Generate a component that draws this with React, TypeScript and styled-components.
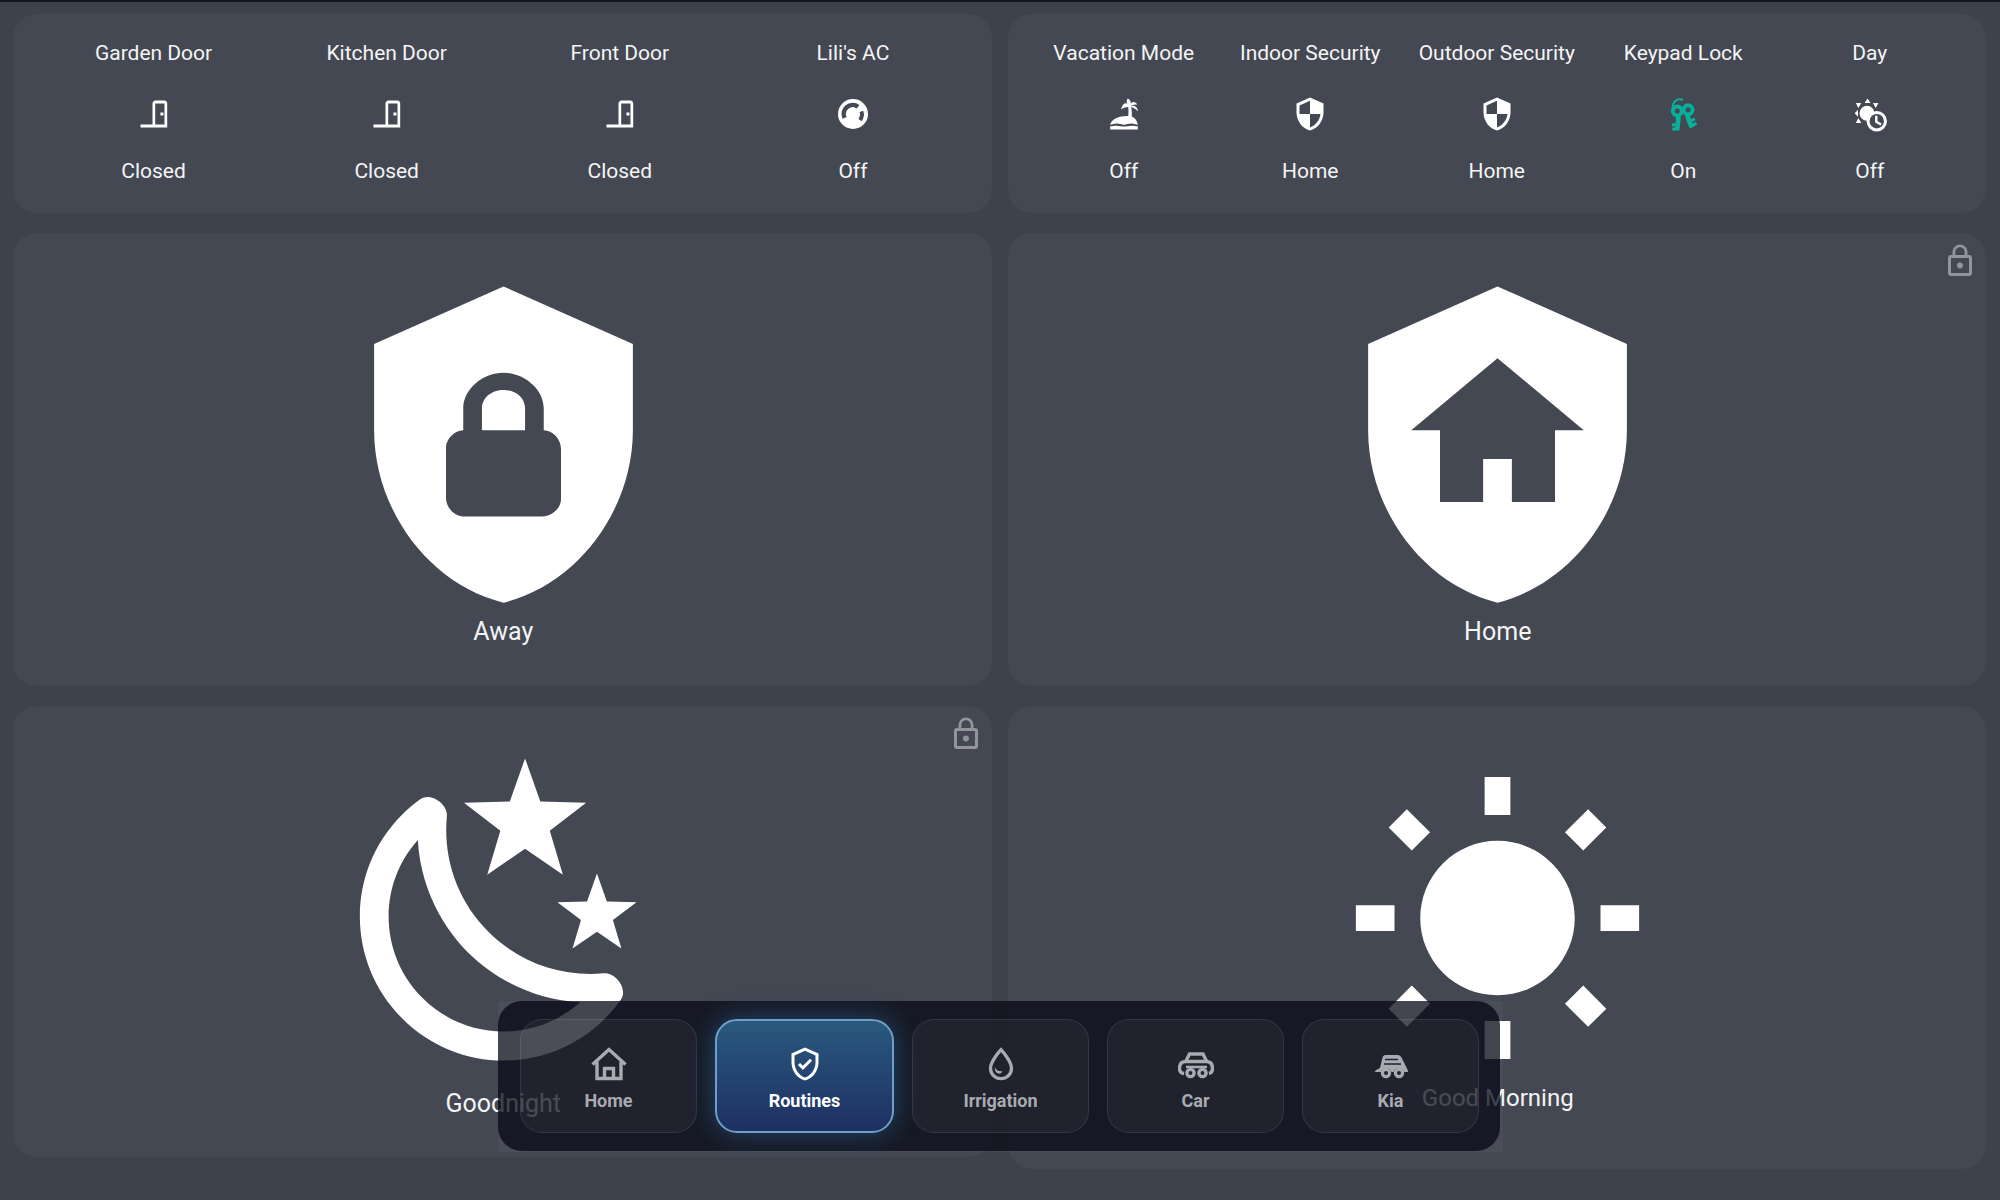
import React from "react";
import styled, { createGlobalStyle } from "styled-components";

const Global = createGlobalStyle`
  html, body {
    margin: 0;
    height: 100%;
    background: #3e424c;
    overflow: hidden;
  }
  body {
    font-family: Roboto, "Liberation Sans", sans-serif;
    color: #f4f4f5;
  }
`;

const PATHS = {
  door: "M3 19h8V5c0-1.1.9-2 2-2h6c1.1 0 1.8.9 1.8 2v16H3v-2zM12.8 5v14h6.2V5h-6.2zM16.3 11h2v2h-2v-2z",
  security:
    "M12,12H19C18.47,16.11 15.72,19.78 12,20.92V12H5V6.3L12,3.19M12,1L3,5V11C3,16.55 6.84,21.73 12,23C17.16,21.73 21,16.55 21,11V5L12,1Z",
  shieldLock:
    "M12,1L3,5V11C3,16.55 6.84,21.74 12,23C17.16,21.74 21,16.55 21,11V5L12,1M12,7C13.4,7 14.8,8.1 14.8,9.5V11C15.4,11 16,11.6 16,12.3V15.8C16,16.4 15.4,17 14.7,17H9.2C8.6,17 8,16.4 8,15.7V12.2C8,11.6 8.6,11 9.2,11V9.5C9.2,8.1 10.6,7 12,7M12,8.2C11.2,8.2 10.5,8.7 10.5,9.5V11H13.5V9.5C13.5,8.7 12.8,8.2 12,8.2Z",
  shieldHome:
    "M12,1L3,5V11C3,16.5 6.8,21.7 12,23C17.2,21.7 21,16.5 21,11V5L12,1M12,6L18,11H16V16H13V13H11V16H8V11H6L12,6Z",
  night:
    "M17.75,4.09L15.22,6.03L16.13,9.09L13.5,7.28L10.87,9.09L11.78,6.03L9.25,4.09L12.44,4L13.5,1L14.56,4L17.75,4.09M21.25,11L19.61,12.25L20.2,14.23L18.5,13.06L16.8,14.23L17.39,12.25L15.75,11L17.81,10.95L18.5,9L19.19,10.95L21.25,11M18.97,15.95C19.8,15.87 20.69,17.05 20.16,17.8C19.84,18.25 19.5,18.67 19.08,19.07C15.17,23 8.84,23 4.94,19.07C1.03,15.17 1.03,8.83 4.94,4.93C5.34,4.53 5.76,4.17 6.21,3.85C6.96,3.32 8.14,4.21 8.06,5.04C7.79,7.9 8.75,10.87 10.95,13.06C13.14,15.26 16.1,16.22 18.97,15.95M17.33,17.97C14.5,17.81 11.7,16.64 9.53,14.5C7.36,12.31 6.2,9.5 6.04,6.68C3.23,9.82 3.34,14.64 6.35,17.66C9.37,20.67 14.19,20.78 17.33,17.97Z",
  sun: "M3.55,18.54L4.96,19.95L6.76,18.16L5.34,16.74M11,22.45C11.32,22.45 13,22.45 13,22.45V19.5H11M12,5.5A6,6 0 0,0 6,11.5A6,6 0 0,0 12,17.5A6,6 0 0,0 18,11.5C18,8.18 15.31,5.5 12,5.5M20,12.5H23V10.5H20M17.24,18.16L19.04,19.95L20.45,18.54L18.66,16.74M20.45,4.46L19.04,3.05L17.24,4.84L18.66,6.26M13,0.55H11V3.5H13M4,10.5H1V12.5H4M6.76,4.84L4.96,3.05L3.55,4.46L5.34,6.26L6.76,4.84Z",
  lock: "M12,17C13.1,17 14,16.1 14,15C14,13.89 13.1,13 12,13A2,2 0 0,0 10,15A2,2 0 0,0 12,17M18,20H6V10H18M18,8H17V6A5,5 0 0,0 12,1A5,5 0 0,0 7,6V8H6A2,2 0 0,0 4,10V20A2,2 0 0,0 6,22H18A2,2 0 0,0 20,20V10A2,2 0 0,0 18,8M8.9,6C8.9,4.29 10.29,2.9 12,2.9C13.71,2.9 15.1,4.29 15.1,6V8H8.9V6Z",
  shieldCheck:
    "M21,11C21,16.55 17.16,21.74 12,23C6.84,21.74 3,16.55 3,11V5L12,1L21,5V11M12,21C15.75,20 19,15.54 19,11.22V6.3L12,3.18L5,6.3V11.22C5,15.54 8.25,20 12,21M10.6,16L7.3,12.7L8.7,11.3L10.6,13.2L15.3,8.5L16.7,9.9L10.6,16Z",
};

type IconName = keyof typeof PATHS;

const Svg = styled.svg<{ $size: number; $color?: string }>`
  display: block;
  flex: none;
  width: ${(p) => p.$size}px;
  height: ${(p) => p.$size}px;
  color: ${(p) => p.$color || "#fff"};
  fill: currentColor;
`;

function MdiIcon({ name, size, color }: { name: IconName; size: number; color?: string }) {
  return (
    <Svg viewBox="0 0 24 24" $size={size} $color={color}>
      <path fillRule="evenodd" d={PATHS[name]} />
    </Svg>
  );
}

const CARD = "#434852";

function AcIcon() {
  return (
    <Svg viewBox="0 0 24 24" $size={36}>
      <circle cx="12" cy="12" r="10" />
      <path d="M6.4 14.6A6 6 0 0 1 15.4 7.2" fill="none" stroke={CARD} strokeWidth="3" />
      <path d="M17.6 10.2A6 6 0 0 1 16.6 16" fill="none" stroke={CARD} strokeWidth="2.6" />
    </Svg>
  );
}

function IslandIcon() {
  return (
    <Svg viewBox="0 0 24 24" $size={36}>
      <path d="M2.8 19.2C3.6 15.4 9 13.2 15 13.4C18.6 13.5 20.6 15.8 21.2 19.2C19.8 19.2 18.6 18.4 16.8 18.4C14.8 18.4 13.8 19.2 12 19.2C10.2 19.2 9.2 18.4 7.2 18.4C5.4 18.4 4.4 19.2 2.8 19.2Z" />
      <path d="M2.8 20.2C4.4 20.2 5.4 19.8 7.2 19.8C9.2 19.8 10.2 20.4 12 20.4C13.8 20.4 14.8 19.8 16.8 19.8C18.6 19.8 19.6 20.2 21.2 20.2V22.4H2.8Z" />
      <path d="M14.7 14.6C15.1 12 15.1 9 14.7 6.4H16.5C17.3 9 17.4 12 17.1 14.6Z" />
      <path d="M15.8 7.4C14.6 3.8 11.2 3.8 10 9C11.8 7.6 13.8 7 15.8 7.4Z" />
      <path d="M15.8 7.4C13.4 5 13.4 2.8 14.6 1.6C16.6 2.8 17.2 5 15.8 7.4Z" />
      <path d="M15.8 7.4C16.2 3.6 19.2 3 21 5.8C18.8 5.4 17.2 6 15.8 7.4Z" />
      <path d="M15.8 7.4C18.4 5.4 21 7 21.4 10.4C19.6 8.4 17.8 7.4 15.8 7.4Z" />
    </Svg>
  );
}

function KeysIcon() {
  return (
    <Svg viewBox="0 0 24 24" $size={36} $color="#06b09a">
      <g fill="none" stroke="currentColor">
        <path d="M5.2 8.4C4.8 4 8 1.2 12 2.6" strokeWidth="1.4" />
        <circle cx="8.2" cy="10" r="3" strokeWidth="2.6" />
        <path d="M8.6 13C9.4 15.5 8.4 19.5 7.9 23" strokeWidth="3.2" />
        <path d="M7 19.2H4.6M7 22H4.8" strokeWidth="2" />
        <circle cx="15.4" cy="9.2" r="3" strokeWidth="2.6" />
        <path d="M15 12.2C15 14.5 16.6 18 18 21" strokeWidth="3.2" />
        <path d="M17 16.6L20 15.2M18 19.6L21 18.2" strokeWidth="2" />
      </g>
    </Svg>
  );
}

function DayIcon() {
  return (
    <Svg viewBox="0 0 24 24" $size={36}>
      <circle cx="10" cy="11.5" r="5" />
      <path d="M10.4 1.6L12.4 4.6H8.4ZM2.6 4.6H6.2L4.2 8ZM17.6 4.6H14L15.8 8ZM1.8 11.5L4 9.2V13.8ZM2.6 18H6.2L4.2 14.6Z" />
      <circle cx="16.5" cy="16.8" r="5.8" fill={CARD} stroke="currentColor" strokeWidth="2" />
      <path d="M16.2 13.2V17.2L19.4 19" fill="none" stroke="currentColor" strokeWidth="1.6" />
    </Svg>
  );
}

const DOCK_GREY = "#a9abb1";

function HomeGlyph() {
  return (
    <Svg viewBox="0 0 36 36" $size={36} $color={DOCK_GREY}>
      <g fill="none" stroke="currentColor" strokeWidth="3.4">
        <path d="M1.5 18.5L18 3.5L34.5 18.5" />
        <path d="M6 15.5V32.5H30V15.5" />
        <path d="M13.5 32.5V22.5H22.5V32.5" />
      </g>
    </Svg>
  );
}

function DropGlyph() {
  return (
    <Svg viewBox="0 0 24 24" $size={36} $color={DOCK_GREY}>
      <path d="M12 2.4C12 2.4 5 10 5 14.8A7 7 0 0 0 19 14.8C19 10 12 2.4 12 2.4Z" fill="none" stroke="currentColor" strokeWidth="2.2" />
      <path d="M8 14C8.6 16.2 10.2 17 13 16.8C12.4 18.4 10.6 18.8 9.4 18C8.2 17.2 7.6 15.6 8 14Z" />
    </Svg>
  );
}

function CarGlyph() {
  return (
    <Svg viewBox="0 0 36 36" $size={36} $color={DOCK_GREY}>
      <g fill="none" stroke="currentColor" strokeWidth="3.4">
        <path d="M8 15L11.5 8H25L28.5 15" />
        <path d="M6 27.5C3 27 1.5 25.5 1.5 22.5C1.5 18 4 15.5 8 15.5H28C32 15.5 34.5 18 34.5 22.5C34.5 25.5 33 27 31 27.5" />
        <path d="M8 21H29" strokeWidth="2.6" />
        <circle cx="12.5" cy="27" r="3.6" />
        <circle cx="24.5" cy="27" r="3.6" />
      </g>
    </Svg>
  );
}

function KiaGlyph() {
  return (
    <Svg viewBox="0 0 36 36" $size={36} $color={DOCK_GREY}>
      <path d="M2 25.5C3 23.5 5 23 7 22L9.5 11.5C10 10 11 9 12.5 9H25C26.5 9 27.5 10 28.5 11.5L33.5 21.5C34.5 23 35 24.5 35 26H31A5.5 5.5 0 0 0 20.5 26H18.5A5.5 5.5 0 0 0 8 26H2Z" />
      <path d="M12 13.5H25M11 18H28" fill="none" stroke="#1f222d" strokeWidth="1.4" />
      <circle cx="13" cy="27" r="3.6" fill="none" stroke="currentColor" strokeWidth="3.2" />
      <circle cx="26" cy="27" r="3.6" fill="none" stroke="currentColor" strokeWidth="3.2" />
    </Svg>
  );
}

const TopLine = styled.div`
  height: 2px;
  background: #14161e;
`;

const Columns = styled.main`
  display: grid;
  grid-template-columns: 1fr 1fr;
  column-gap: 16px;
  padding: 12px 14px 0 13px;
`;

const Column = styled.div`
  display: flex;
  flex-direction: column;
  gap: 20px;
`;

const Card = styled.section`
  position: relative;
  box-sizing: border-box;
  background: ${CARD};
  border-radius: 24px;
`;

const StatusCard = styled(Card)<{ $cols: number; $inset: number }>`
  display: grid;
  grid-template-columns: repeat(${(p) => p.$cols}, 1fr);
  padding: 27px ${(p) => 46 - p.$inset}px 30px ${(p) => p.$inset}px;
`;

const StatusCell = styled.div`
  display: flex;
  flex-direction: column;
  align-items: center;
  font-size: 21px;
  line-height: 24px;
  white-space: nowrap;
`;

const IconSlot = styled.div`
  margin: 31px 0 27px;
`;

const RoutineCard = styled(Card)<{ $height: number; $gap: number; $top?: number; $bottom?: number }>`
  display: flex;
  flex-direction: column;
  align-items: center;
  justify-content: center;
  height: ${(p) => p.$height}px;
  gap: ${(p) => p.$gap}px;
  padding: ${(p) => p.$top || 0}px 0 ${(p) => p.$bottom || 0}px 2px;
`;

const RoutineName = styled.div<{ $small?: boolean }>`
  font-size: ${(p) => (p.$small ? 24 : 25)}px;
  line-height: 30px;
`;

const LockBadge = styled.div`
  position: absolute;
  top: 10px;
  right: 8px;
  opacity: 0.42;
`;

const DockFrame = styled.nav`
  position: absolute;
  left: 498px;
  top: 1001px;
  width: 1005px;
  height: 151px;
  background: rgba(255, 255, 255, 0.035);
`;

const Dock = styled.div`
  box-sizing: border-box;
  display: flex;
  gap: 18px;
  width: 1002px;
  height: 150px;
  padding: 18px 21px 18px 22px;
  border-radius: 24px;
  background: rgba(5, 8, 20, 0.75);
`;

const DockItem = styled.div<{ $active?: boolean }>`
  box-sizing: border-box;
  flex: 1;
  display: flex;
  flex-direction: column;
  align-items: center;
  padding-top: ${(p) => (p.$active ? 25 : 26)}px;
  border-radius: 22px;
  border: ${(p) => (p.$active ? "2px solid #6f9ec9" : "1px solid rgba(255, 255, 255, 0.09)")};
  background: ${(p) =>
    p.$active ? "linear-gradient(180deg, #29597f 0%, #1e3062 100%)" : "rgba(255, 255, 255, 0.045)"};
  box-shadow: ${(p) => (p.$active ? "0 0 26px rgba(62, 150, 220, 0.38)" : "none")};
  color: ${(p) => (p.$active ? "#fff" : DOCK_GREY)};
`;

const DockLabel = styled.div`
  margin-top: 7px;
  font-size: 18px;
  font-weight: 700;
  line-height: 24px;
`;

const leftStatus: { name: string; state: string; icon: React.ReactNode }[] = [
  { name: "Garden Door", state: "Closed", icon: <MdiIcon name="door" size={36} /> },
  { name: "Kitchen Door", state: "Closed", icon: <MdiIcon name="door" size={36} /> },
  { name: "Front Door", state: "Closed", icon: <MdiIcon name="door" size={36} /> },
  { name: "Lili's AC", state: "Off", icon: <AcIcon /> },
];

const rightStatus: { name: string; state: string; icon: React.ReactNode }[] = [
  { name: "Vacation Mode", state: "Off", icon: <IslandIcon /> },
  { name: "Indoor Security", state: "Home", icon: <MdiIcon name="security" size={36} /> },
  { name: "Outdoor Security", state: "Home", icon: <MdiIcon name="security" size={36} /> },
  { name: "Keypad Lock", state: "On", icon: <KeysIcon /> },
  { name: "Day", state: "Off", icon: <DayIcon /> },
];

const dockItems: { label: string; icon: React.ReactNode; active?: boolean }[] = [
  { label: "Home", icon: <HomeGlyph /> },
  { label: "Routines", icon: <MdiIcon name="shieldCheck" size={36} />, active: true },
  { label: "Irrigation", icon: <DropGlyph /> },
  { label: "Car", icon: <CarGlyph /> },
  { label: "Kia", icon: <KiaGlyph /> },
];

function Status({ items, inset }: { items: typeof leftStatus; inset: number }) {
  return (
    <StatusCard $cols={items.length} $inset={inset}>
      {items.map((item) => (
        <StatusCell key={item.name}>
          {item.name}
          <IconSlot>{item.icon}</IconSlot>
          {item.state}
        </StatusCell>
      ))}
    </StatusCard>
  );
}

export default function App() {
  return (
    <>
      <Global />
      <TopLine />
      <Columns>
        <Column>
          <Status items={leftStatus} inset={24} />
          <RoutineCard $height={453} $gap={-7} $bottom={1}>
            <MdiIcon name="shieldLock" size={345} />
            <RoutineName>Away</RoutineName>
          </RoutineCard>
          <RoutineCard $height={451} $gap={-9} $top={1} $bottom={1}>
            <LockBadge>
              <MdiIcon name="lock" size={36} />
            </LockBadge>
            <MdiIcon name="night" size={345} />
            <RoutineName>Goodnight</RoutineName>
          </RoutineCard>
        </Column>
        <Column>
          <Status items={rightStatus} inset={23} />
          <RoutineCard $height={453} $gap={-7} $bottom={1}>
            <LockBadge>
              <MdiIcon name="lock" size={36} />
            </LockBadge>
            <MdiIcon name="shieldHome" size={345} />
            <RoutineName>Home</RoutineName>
          </RoutineCard>
          <RoutineCard $height={463} $gap={4} $top={7}>
            <MdiIcon name="sun" size={309} />
            <RoutineName $small>Good Morning</RoutineName>
          </RoutineCard>
        </Column>
      </Columns>
      <DockFrame>
        <Dock>
          {dockItems.map((item) => (
            <DockItem key={item.label} $active={item.active}>
              {item.icon}
              <DockLabel>{item.label}</DockLabel>
            </DockItem>
          ))}
        </Dock>
      </DockFrame>
    </>
  );
}
